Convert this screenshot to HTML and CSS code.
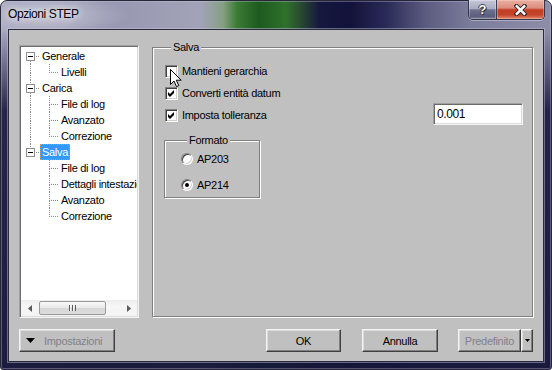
FILE: index.html
```html
<!DOCTYPE html>
<html lang="it">
<head>
<meta charset="utf-8">
<title>Opzioni STEP</title>
<link rel="stylesheet" href="styles.css">
</head>
<body>
<div class="window">
  <div class="titlebar">
    <span class="title">Opzioni STEP</span>
    <div class="caption">
      <span class="cap cap-help">?</span>
      <span class="cap cap-close">
        <svg width="13" height="12" viewBox="0 0 13 12"><path d="M2.5 2 L10.5 10 M10.5 2 L2.5 10" stroke="#3a2a2a" stroke-width="4.4" stroke-linecap="square" fill="none"/><path d="M2.8 2.3 L10.2 9.7 M10.2 2.3 L2.8 9.7" stroke="#fff" stroke-width="2.4" stroke-linecap="square" fill="none"/></svg>
      </span>
    </div>
  </div>
  <div class="client">
    <div class="main">
      <div class="tree">
        <div class="tree-rows">
          <div class="row">
            <span class="g root"><span class="q tr h"></span><span class="q br v"></span><span class="box"></span></span>
            <span class="lbl">Generale</span>
          </div>
          <div class="row">
            <span class="g root"><span class="q tr v"></span><span class="q br v"></span></span>
            <span class="g child"><span class="q tr v h"></span></span>
            <span class="lbl">Livelli</span>
          </div>
          <div class="row">
            <span class="g root"><span class="q tr v h"></span><span class="q br v"></span><span class="box"></span></span>
            <span class="lbl">Carica</span>
          </div>
          <div class="row">
            <span class="g root"><span class="q tr v"></span><span class="q br v"></span></span>
            <span class="g child"><span class="q tr v h"></span><span class="q br v"></span></span>
            <span class="lbl">File di log</span>
          </div>
          <div class="row">
            <span class="g root"><span class="q tr v"></span><span class="q br v"></span></span>
            <span class="g child"><span class="q tr v h"></span><span class="q br v"></span></span>
            <span class="lbl">Avanzato</span>
          </div>
          <div class="row">
            <span class="g root"><span class="q tr v"></span><span class="q br v"></span></span>
            <span class="g child"><span class="q tr v h"></span></span>
            <span class="lbl">Correzione</span>
          </div>
          <div class="row">
            <span class="g root"><span class="q tr v h"></span><span class="box"></span></span>
            <span class="lbl sel">Salva</span>
          </div>
          <div class="row">
            <span class="g root"></span>
            <span class="g child"><span class="q tr v h"></span><span class="q br v"></span></span>
            <span class="lbl">File di log</span>
          </div>
          <div class="row">
            <span class="g root"></span>
            <span class="g child"><span class="q tr v h"></span><span class="q br v"></span></span>
            <span class="lbl">Dettagli intestazione</span>
          </div>
          <div class="row">
            <span class="g root"></span>
            <span class="g child"><span class="q tr v h"></span><span class="q br v"></span></span>
            <span class="lbl">Avanzato</span>
          </div>
          <div class="row">
            <span class="g root"></span>
            <span class="g child"><span class="q tr v h"></span></span>
            <span class="lbl">Correzione</span>
          </div>
        </div>
        <div class="hscroll">
          <span class="sb-btn"><svg width="4" height="7" viewBox="0 0 4 7"><polygon points="4,0 0,3.5 4,7" fill="#5a5a5a"/></svg></span>
          <span class="thumb"><span class="grip"></span></span>
          <span class="track"></span>
          <span class="sb-btn"><svg width="4" height="7" viewBox="0 0 4 7"><polygon points="0,0 4,3.5 0,7" fill="#5a5a5a"/></svg></span>
        </div>
      </div>

      <div class="group salva">
        <span class="group-title">Salva</span>
        <div class="opt first-opt">
          <span class="chk">
            <svg class="cursor" width="13" height="19" viewBox="0 0 13 19"><path d="M0.5 0.5 L0.5 15.5 L4 12 L6.5 17.6 L8.8 16.6 L6.3 11.2 L11.2 11.2 Z" fill="#fff" stroke="#000" stroke-width="1" stroke-linejoin="miter"/></svg>
          </span>
          <span class="opt-label">Mantieni gerarchia</span>
        </div>
        <div class="opt">
          <span class="chk"><svg width="7" height="7" viewBox="0 0 7 7"><polygon points="0,2 2,4 6,0 6,3 2,7 0,5" fill="#000"/></svg></span>
          <span class="opt-label">Converti entità datum</span>
        </div>
        <div class="opt">
          <span class="chk"><svg width="7" height="7" viewBox="0 0 7 7"><polygon points="0,2 2,4 6,0 6,3 2,7 0,5" fill="#000"/></svg></span>
          <span class="opt-label">Imposta tolleranza</span>
          <span class="field">0.001</span>
        </div>

        <div class="group formato">
          <span class="group-title">Formato</span>
          <div class="radio-row first-radio">
            <span class="radio"></span>
            <span class="opt-label">AP203</span>
          </div>
          <div class="radio-row">
            <span class="radio on"></span>
            <span class="opt-label">AP214</span>
          </div>
        </div>
      </div>
    </div>

    <div class="buttons">
      <span class="btn btn-settings disabled">
        <svg width="9" height="5" viewBox="0 0 9 5"><polygon points="0,0 9,0 4.5,5" fill="#000"/></svg>
        <span>Impostazioni</span>
      </span>
      <span class="btn btn-ok">OK</span>
      <span class="btn btn-cancel">Annulla</span>
      <span class="split">
        <span class="btn btn-default disabled">Predefinito</span>
        <span class="btn btn-arrow"><svg width="5" height="3" viewBox="0 0 5 3"><polygon points="0,0 5,0 2.5,3" fill="#000"/></svg></span>
      </span>
    </div>
  </div>
</div>
</body>
</html>
```

FILE: styles.css
```css
* { box-sizing: border-box; }

html, body {
  margin: 0;
  padding: 0;
  background: #ffffff;
}

body {
  width: 552px;
  height: 370px;
  overflow: hidden;
  font-family: "Liberation Sans", Arial, sans-serif;
  font-size: 11px;
  color: #000;
}

.window {
  width: 552px;
  height: 370px;
  border: 1px solid #262636;
  border-radius: 7px 7px 3px 3px;
  padding: 0 7px 7px;
  display: flex;
  flex-direction: column;
  background:
    radial-gradient(ellipse 80px 22px at 48px 14px, rgba(230,230,240,.55), rgba(230,230,240,0)),
    linear-gradient(to bottom, rgba(24,24,62,0) 0, rgba(24,24,62,0) 30px, rgba(24,24,62,.9) 110px, rgba(22,22,58,.96) 100%),
    linear-gradient(to right, #a6a6be 0, #9696b0 100px, #a2a2b8 200px, #86a082 222px, #3a7c34 236px, #1e5a1f 258px, #2f712c 285px, #284a30 300px, #17183e 318px, #12123a 350px, #2a2a58 385px, #5c5c80 425px, #7c7c9c 470px, #8e8eaa 552px);
  box-shadow: inset 0 0 0 1px rgba(200,200,230,.35);
}

/* ---------- title bar ---------- */
.titlebar {
  height: 28px;
  display: flex;
  align-items: flex-start;
  flex: none;
}

.title {
  padding-top: 6px;
  font-size: 12px;
  line-height: 15px;
  letter-spacing: -0.4px;
  color: #000;
  text-shadow: 0 0 6px rgba(255,255,255,.8), 0 0 10px rgba(255,255,255,.6);
}

.caption {
  display: flex;
  margin: -1px -1px 0 auto;
  height: 20px;
  border: 1px solid #33334a;
  border-top: none;
  border-radius: 0 0 5px 5px;
  overflow: hidden;
  box-shadow: 0 1px 0 rgba(255,255,255,.35);
}

.cap {
  display: flex;
  align-items: center;
  justify-content: center;
  height: 100%;
}

.cap-help {
  width: 28px;
  border-right: 1px solid #3a3a52;
  background: linear-gradient(#c6c8d8 0, #a9abc2 45%, #6e708e 52%, #5c5e7e 85%, #7a7c98 100%);
  color: #fff;
  font-weight: bold;
  font-size: 13px;
  line-height: 13px;
  text-shadow: 0 0 1px #222, 1px 1px 0 #333, -1px 0 0 #444, 0 -1px 0 #555;
  box-shadow: inset 0 0 0 1px rgba(255,255,255,.3);
}

.cap-close {
  width: 47px;
  background: linear-gradient(#eab0a2 0, #dc8c7c 42%, #c43c24 52%, #c4442a 78%, #e08a6e 100%);
  box-shadow: inset 0 0 0 1px rgba(255,220,210,.35);
}

/* ---------- client ---------- */
.client {
  flex: 1;
  background: #c0c0c0;
  border: 1px solid #2a2a3a;
  box-shadow: 0 0 0 1px rgba(200,200,228,.45);
  padding: 15px 10px 9px;
  display: flex;
  flex-direction: column;
}

.main {
  display: flex;
  align-items: flex-start;
  gap: 13px;
  height: 273px;
  flex: none;
}

/* ---------- tree ---------- */
.tree {
  width: 120px;
  height: 273px;
  flex: none;
  background: #fff;
  border: 1px solid;
  border-color: #a0a0a0 #f4f4f4 #f4f4f4 #a0a0a0;
  box-shadow: inset 1px 1px 0 #6e6e6e, inset -1px -1px 0 #dcdcdc;
  padding: 1px;
  display: flex;
  flex-direction: column;
}

.tree-rows {
  flex: 1;
  overflow: hidden;
  padding-top: 1px;
}

.row {
  display: flex;
  height: 16px;
  white-space: nowrap;
}

.g {
  display: grid;
  grid-template-rows: 9px 7px;
  flex: none;
  height: 16px;
}

.g.root { width: 18px; grid-template-columns: 9px 9px; }
.g.child { width: 19px; grid-template-columns: 10px 9px; }

.q { display: block; }
.tr { grid-column: 2; grid-row: 1; }
.br { grid-column: 2; grid-row: 2; }
.v { border-left: 1px dotted #8c8c8c; }
.h { border-bottom: 1px dotted #8c8c8c; }

.box {
  grid-column: 1 / 3;
  grid-row: 1 / 3;
  align-self: start;
  justify-self: start;
  margin: 4px 0 0 5px;
  width: 9px;
  height: 9px;
  border: 1px solid #8e8e8e;
  background: #fff;
  display: flex;
  align-items: center;
  justify-content: center;
}

.box::before {
  content: "";
  width: 5px;
  height: 1px;
  background: #000;
}

.lbl {
  margin-left: 1px;
  padding: 0 1px;
  border: 1px solid transparent;
  height: 16px;
  line-height: 14px;
  letter-spacing: -0.3px;
}

.lbl.sel {
  background: #3399ff;
  color: #fff;
  border: 1px dotted #d49a4c;
}

/* scrollbar */
.hscroll {
  height: 16px;
  flex: none;
  display: flex;
  background: linear-gradient(#ededed, #f6f6f6 40%, #f3f3f3);
}

.sb-btn {
  width: 17px;
  display: flex;
  align-items: center;
  justify-content: center;
  flex: none;
}

.thumb {
  width: 67px;
  margin: 1px 0 1px 1px;
  border: 1px solid #9a9a9a;
  border-radius: 2px;
  background: linear-gradient(#f8f8f8, #e8e8e8 50%, #d6d6d6 51%, #dcdcdc);
  display: flex;
  align-items: center;
  justify-content: center;
  flex: none;
}

.grip {
  width: 7px;
  height: 6px;
  background: repeating-linear-gradient(to right, #5a5a5a 0 1px, #f4f4f4 1px 2px, transparent 2px 3px);
}

.track { flex: 1; }

/* ---------- group boxes ---------- */
.group {
  border: 1px solid #808080;
  box-shadow: inset 1px 1px 0 #fff, 1px 1px 0 #fff;
  display: flex;
  flex-direction: column;
}

.group-title {
  align-self: flex-start;
  margin: -7px 0 0 6px;
  padding: 0 2px;
  background: #c0c0c0;
  line-height: 13px;
  letter-spacing: -0.3px;
}

.salva {
  flex: 1;
  margin-top: 2px;
  height: 270px;
  padding: 0 9px 0 12px;
}

.opt {
  display: flex;
  align-items: center;
  gap: 4px;
  height: 13px;
  margin-top: 9px;
}

.opt.first-opt { margin-top: 11px; }

.opt-label {
  letter-spacing: -0.3px;
  line-height: 13px;
  white-space: nowrap;
}

.chk {
  width: 13px;
  height: 13px;
  flex: none;
  background: #fff;
  border: 1px solid;
  border-color: #808080 #fff #fff #808080;
  box-shadow: inset 1px 1px 0 #404040, inset -1px -1px 0 #d4d0c8;
  display: flex;
  align-items: center;
  justify-content: center;
  position: relative;
}

.cursor {
  position: absolute;
  left: 4px;
  top: 3px;
}

.field {
  margin: -6px 0 -3px auto;
  width: 90px;
  height: 22px;
  background: #fff;
  border: 1px solid;
  border-color: #a0a0a0 #f4f4f4 #f4f4f4 #a0a0a0;
  box-shadow: inset 1px 1px 0 #696969, inset -1px -1px 0 #dcdcdc;
  padding: 0 3px;
  font-size: 12px;
  line-height: 20px;
  letter-spacing: -0.4px;
}

.formato {
  margin: 18px 0 0 -1px;
  width: 96px;
  height: 58px;
  padding-left: 16px;
  flex: none;
}

.radio-row {
  display: flex;
  align-items: center;
  gap: 4px;
  height: 12px;
  margin-top: 14px;
}

.radio-row.first-radio { margin-top: 6px; }

.radio {
  width: 12px;
  height: 12px;
  flex: none;
  border-radius: 50%;
  background: #fff;
  border: 1px solid;
  border-color: #808080 #fff #fff #808080;
  box-shadow: inset 1px 1px 0 #404040, inset -1px -1px 0 #d4d0c8;
  display: flex;
  align-items: center;
  justify-content: center;
}

.radio.on::after {
  content: "";
  width: 4px;
  height: 4px;
  border-radius: 50%;
  background: #000;
}

/* ---------- buttons ---------- */
.buttons {
  display: flex;
  align-items: flex-start;
  height: 23px;
  margin-top: 11px;
  flex: none;
}

.btn {
  height: 23px;
  display: flex;
  align-items: center;
  justify-content: center;
  background: #c0c0c0;
  border: 1px solid;
  border-color: #f4f4f4 #404040 #404040 #f4f4f4;
  box-shadow: inset -1px -1px 0 #808080, inset 1px 1px 0 #dcdcdc;
  letter-spacing: -0.3px;
  white-space: nowrap;
  flex: none;
}

.btn.disabled { color: #80808c; }

.btn-settings {
  width: 96px;
  justify-content: flex-start;
  padding-left: 6px;
  gap: 9px;
}

.btn-ok { width: 75px; margin-left: auto; }
.btn-cancel { width: 76px; margin-left: 21px; }

.split {
  display: flex;
  margin-left: 20px;
}

.btn-default { width: 63px; }
.btn-arrow { width: 12px; }
```
